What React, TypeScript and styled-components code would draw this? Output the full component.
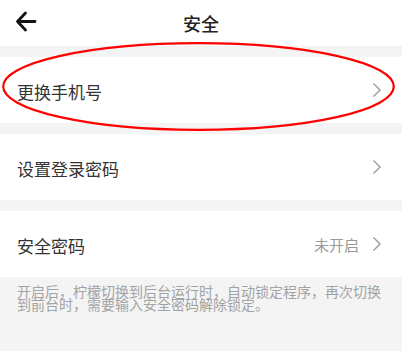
import React from "react";
import styled, { createGlobalStyle } from "styled-components";

const Global = createGlobalStyle`
  html, body { margin: 0; padding: 0; background: #f4f4f4; }
  body { font-family: "Noto Sans CJK SC", "Noto Sans", sans-serif; }
  * { box-sizing: border-box; }
`;

const Page = styled.div`
  position: relative;
  width: 402px;
  height: 351px;
  background: #f4f4f4;
  overflow: hidden;
  display: flex;
  flex-direction: column;
`;

const Header = styled.div`
  height: 46px;
  background: #fff;
  display: flex;
  align-items: center;
  justify-content: center;
  position: relative;
  flex-shrink: 0;
`;

const Back = styled.svg`
  position: absolute;
  left: 14px;
  top: 10px;
`;

const Title = styled.div`
  font-size: 18px;
  font-weight: 500;
  color: #222;
  line-height: 1;
`;

const Group = styled.div`
  margin-top: 11px;
  background: #fff;
`;

const Row = styled.div`
  height: 66px;
  display: flex;
  align-items: center;
  padding: 0 20px 0 17px;
`;

const Label = styled.div`
  flex: 1;
  font-size: 17px;
  color: #333;
  line-height: 1;
  padding-top: 2px;
`;

const Value = styled.div`
  font-size: 15px;
  color: #999;
  line-height: 1;
  margin-right: 13px;
`;

const Note = styled.div`
  padding: 8px 17px 0 17px;
  font-size: 14px;
  line-height: 13px;
  color: #a3a3a3;
`;

const Overlay = styled.svg`
  position: absolute;
  left: 0;
  top: 0;
  pointer-events: none;
`;

const Chevron = () => (
  <svg width="10" height="16" viewBox="0 0 10 16">
    <path d="M1.5 1.5 L8 8 L1.5 14.5" fill="none" stroke="#999" strokeWidth="1.4" />
  </svg>
);

const Item = ({ label, value }: { label: string; value?: string }) => (
  <Group>
    <Row>
      <Label>{label}</Label>
      {value && <Value>{value}</Value>}
      <Chevron />
    </Row>
  </Group>
);

export default function App() {
  return (
    <>
      <Global />
      <Page>
        <Header>
          <Back width="24" height="24" viewBox="0 0 24 24">
            <path
              d="M21 11.5 H4 M11.5 3 L3.5 11.5 L11.5 20"
              fill="none"
              stroke="#111"
              strokeWidth="2.8"
              strokeLinecap="round"
              strokeLinejoin="round"
            />
          </Back>
          <Title>安全</Title>
        </Header>
        <Item label="更换手机号" />
        <Item label="设置登录密码" />
        <Item label="安全密码" value="未开启" />
        <Note>
          开启后，柠檬切换到后台运行时，自动锁定程序，再次切换到前台时，需要输入安全密码解除锁定。
        </Note>
        <Overlay width="402" height="351" viewBox="0 0 402 351">
          <ellipse cx="198.5" cy="86.5" rx="195.3" ry="43.3" fill="none" stroke="#ff0000" strokeWidth="2.2" />
        </Overlay>
      </Page>
    </>
  );
}
